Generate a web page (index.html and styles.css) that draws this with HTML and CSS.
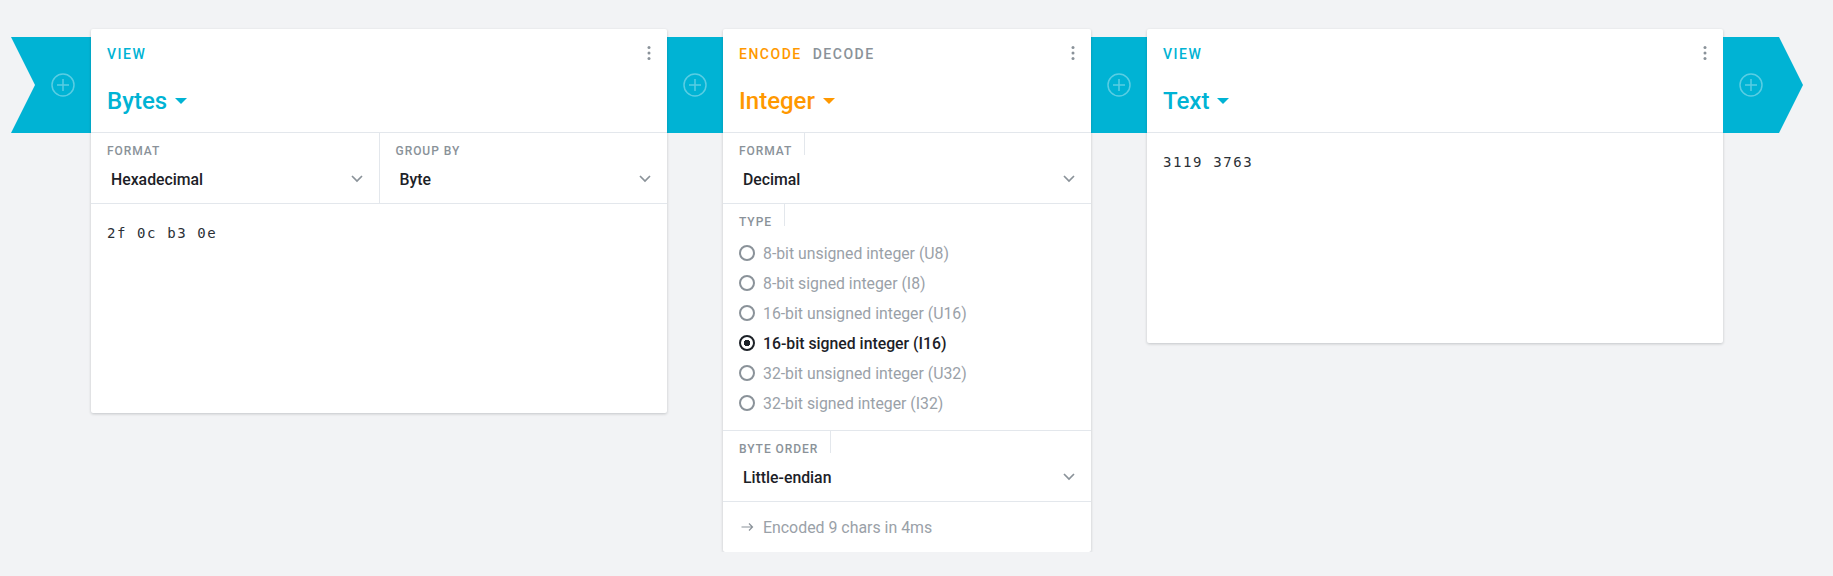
FILE: index.html
```html
<!DOCTYPE html>
<html lang="en">
<head>
  <meta charset="UTF-8" />
  <meta name="viewport" content="width=device-width, initial-scale=1.0"/>
  <title>Bytes to Integer to Text</title>
  <link rel="stylesheet" href="styles.css">
</head>
<body>

<svg class="defs" width="0" height="0">
  <symbol id="plus" viewBox="0 0 24 24">
    <circle cx="12" cy="12" r="11" fill="none" stroke="currentColor" stroke-width="1.5"/>
    <path d="M12 6v12M6 12h12" fill="none" stroke="currentColor" stroke-width="1.5"/>
  </symbol>
  <symbol id="chevron" viewBox="0 0 12 8">
    <path d="M1 1l5 5 5-5" fill="none" stroke="currentColor" stroke-width="1.7"/>
  </symbol>
  <symbol id="kebab" viewBox="0 0 4 16">
    <circle cx="2" cy="2.5" r="1.5" fill="currentColor"/>
    <circle cx="2" cy="8" r="1.5" fill="currentColor"/>
    <circle cx="2" cy="13.5" r="1.5" fill="currentColor"/>
  </symbol>
</svg>

<div class="pipeline">

  <div class="connector connector-start">
    <svg class="plus"><use href="#plus"/></svg>
  </div>

  <section class="card card-bytes">
    <header class="card-head">
      <div class="tabs"><span class="tab tab-view">VIEW</span></div>
      <svg class="kebab"><use href="#kebab"/></svg>
      <h2 class="title title-view">Bytes <span class="caret"></span></h2>
    </header>
    <div class="row">
      <div class="field field-split">
        <div class="field-label">FORMAT</div>
        <div class="field-value">Hexadecimal <svg class="chevron"><use href="#chevron"/></svg></div>
      </div>
      <div class="field">
        <div class="field-label">GROUP BY</div>
        <div class="field-value">Byte <svg class="chevron"><use href="#chevron"/></svg></div>
      </div>
    </div>
    <div class="output output-bytes">2f 0c b3 0e</div>
  </section>

  <div class="connector">
    <svg class="plus"><use href="#plus"/></svg>
  </div>

  <section class="card card-integer">
    <header class="card-head">
      <div class="tabs"><span class="tab tab-encode">ENCODE</span><span class="tab">DECODE</span></div>
      <svg class="kebab"><use href="#kebab"/></svg>
      <h2 class="title title-encode">Integer <span class="caret"></span></h2>
    </header>
    <div class="row">
      <div class="field">
        <div class="field-label field-label-tab"><span>FORMAT</span></div>
        <div class="field-value">Decimal <svg class="chevron"><use href="#chevron"/></svg></div>
      </div>
    </div>
    <div class="row row-type">
      <div class="field">
        <div class="field-label field-label-tab"><span>TYPE</span></div>
        <ul class="radios">
          <li class="radio">8-bit unsigned integer (U8)</li>
          <li class="radio">8-bit signed integer (I8)</li>
          <li class="radio">16-bit unsigned integer (U16)</li>
          <li class="radio radio-on">16-bit signed integer (I16)</li>
          <li class="radio">32-bit unsigned integer (U32)</li>
          <li class="radio">32-bit signed integer (I32)</li>
        </ul>
      </div>
    </div>
    <div class="row">
      <div class="field">
        <div class="field-label field-label-tab"><span>BYTE ORDER</span></div>
        <div class="field-value">Little-endian <svg class="chevron"><use href="#chevron"/></svg></div>
      </div>
    </div>
    <footer class="status">
      <svg class="arrow" viewBox="0 0 12 10"><path d="M0 5h11M7.500 1.500l3.500 3.500-3.500 3.500" fill="none" stroke="currentColor" stroke-width="1.2"/></svg>
      <span>Encoded 9 chars in 4ms</span>
    </footer>
  </section>

  <div class="connector">
    <svg class="plus"><use href="#plus"/></svg>
  </div>

  <section class="card card-text">
    <header class="card-head">
      <div class="tabs"><span class="tab tab-view">VIEW</span></div>
      <svg class="kebab"><use href="#kebab"/></svg>
      <h2 class="title title-view">Text <span class="caret"></span></h2>
    </header>
    <div class="output output-text">3119 3763</div>
  </section>

  <div class="connector connector-end">
    <svg class="plus"><use href="#plus"/></svg>
  </div>

</div>

</body>
</html>
```

FILE: styles.css
```css
body {
  margin: 0;
  font-family: Roboto, Arial, sans-serif;
  background-color: #f2f3f5;
  color: #1c2127;
}
.defs {
  display: block;
  height: 0;
}
.pipeline {
  display: flex;
  align-items: flex-start;
  padding: 29px 0 0 11px;
}

/* connectors between the cards */
.connector {
  flex: none;
  display: flex;
  align-items: center;
  justify-content: center;
  width: 56px;
  height: 96px;
  margin-top: 8px;
  background: #00b3d4;
  color: rgba(255,255,255,0.35);
}
.connector-start {
  width: 80px;
  justify-content: flex-end;
  padding-right: 16px;
  box-sizing: border-box;
  clip-path: polygon(0 0, 100% 0, 100% 100%, 0 100%, 24px 50%);
}
.connector-end {
  width: 80px;
  justify-content: flex-start;
  padding-left: 16px;
  box-sizing: border-box;
  clip-path: polygon(0 0, 56px 0, 100% 50%, 56px 100%, 0 100%);
}
.plus {
  width: 24px;
  height: 24px;
}

/* cards */
.card {
  flex: none;
  position: relative;
  background: #fff;
  border-radius: 2px;
  box-shadow: 0 1px 3px rgba(16,22,26,0.2);
}
.card-bytes {
  width: 576px;
  height: 384px;
}
.card-integer {
  width: 368px;
  height: 523px;
}
.card-text {
  width: 576px;
  height: 314px;
}
.card-head {
  position: relative;
  height: 103px;
  padding: 0 16px;
  border-bottom: 1px solid #e3e7ec;
}
.tabs {
  display: flex;
  gap: 11px;
  padding-top: 17px;
}
.tab {
  font-size: 14px;
  line-height: 16px;
  font-weight: 500;
  letter-spacing: 1.5px;
  color: #8a9299;
}
.tab-view {
  color: #00b3d4;
}
.tab-encode {
  color: #ff9800;
}
.kebab {
  position: absolute;
  top: 16px;
  right: 16px;
  width: 4px;
  height: 16px;
  color: #8a9299;
}
.title {
  margin: 23px 0 0;
  font-size: 24px;
  line-height: 32px;
  font-weight: 500;
}
.title-view {
  color: #00b3d4;
}
.title-encode {
  color: #ff9800;
}
.caret {
  display: inline-block;
  vertical-align: middle;
  width: 0;
  height: 0;
  margin: 0 0 4px 2px;
  border-left: 6px solid transparent;
  border-right: 6px solid transparent;
  border-top: 6.5px solid currentColor;
}

/* fields */
.row {
  display: flex;
  border-bottom: 1px solid #e3e7ec;
}
.field {
  flex: 1;
  min-width: 0;
}
.field-split {
  border-right: 1px solid #e3e7ec;
}
.field-label {
  height: 22px;
  padding: 11px 16px 0;
  box-sizing: border-box;
  font-size: 12px;
  line-height: 14px;
  font-weight: 500;
  letter-spacing: 0.96px;
  color: #8a9299;
}
.field-label-tab {
  padding: 0 0 0 16px;
}
.field-label-tab span {
  display: inline-block;
  height: 22px;
  padding: 11px 12px 0 0;
  box-sizing: border-box;
  border-right: 1px solid #e3e7ec;
  vertical-align: top;
}
.field-value {
  display: flex;
  align-items: center;
  justify-content: space-between;
  height: 48px;
  padding: 0 16px 0 20px;
  font-size: 15.8px;
  font-weight: 500;
}
.chevron {
  width: 12px;
  height: 8px;
  color: #8a9299;
}

/* radios */
.radios {
  list-style: none;
  margin: 0;
  padding: 12px 16px;
}
.radio {
  display: flex;
  align-items: center;
  height: 30px;
  font-size: 15.8px;
  color: #9aa1a8;
}
.radio::before {
  content: "";
  flex: none;
  width: 16px;
  height: 16px;
  margin-right: 8px;
  box-sizing: border-box;
  border: 2px solid #8a9299;
  border-radius: 50%;
}
.radio-on {
  font-weight: 500;
  color: #1c2127;
}
.radio-on::before {
  border-color: #1c2127;
  background: radial-gradient(circle, #1c2127 0 3px, #fff 3.5px);
}

/* output text */
.output {
  padding: 19px 16px;
  font-family: "DejaVu Sans Mono", monospace;
  font-size: 14px;
  line-height: 20px;
  letter-spacing: 1.6px;
  color: #2b3036;
}

/* status line */
.status {
  display: flex;
  align-items: center;
  height: 50px;
  padding: 0 16px;
  font-size: 15.9px;
  color: #9aa1a8;
}
.arrow {
  width: 13px;
  height: 10px;
  margin: 0 9px 0 2px;
  color: #8a9299;
}
```
